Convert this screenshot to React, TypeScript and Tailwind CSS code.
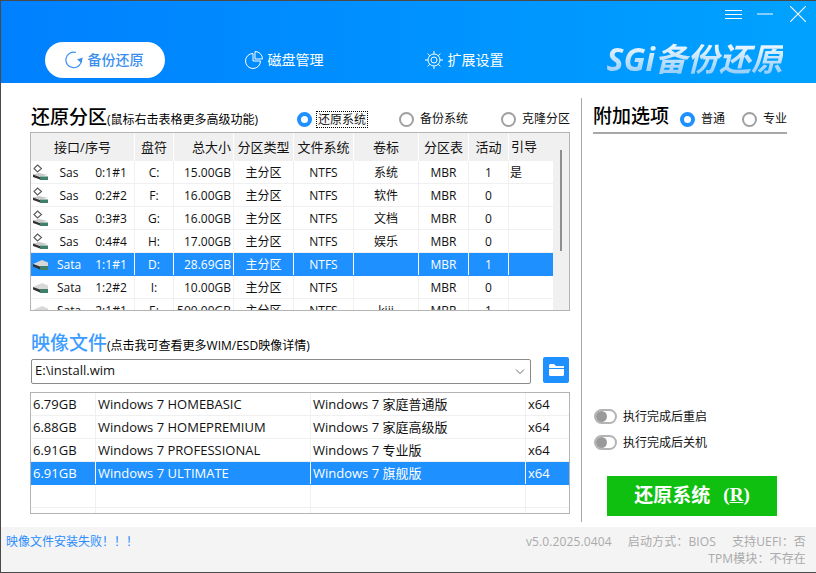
import React from "react";

const PARTS = [
  ["s", "Sas", "0:1#1", "C:", "15.00GB", "主分区", "NTFS", "系统", "MBR", "1", "是"],
  ["s", "Sas", "0:2#2", "F:", "16.00GB", "主分区", "NTFS", "软件", "MBR", "0", ""],
  ["s", "Sas", "0:3#3", "G:", "16.00GB", "主分区", "NTFS", "文档", "MBR", "0", ""],
  ["s", "Sas", "0:4#4", "H:", "17.00GB", "主分区", "NTFS", "娱乐", "MBR", "0", ""],
  ["d", "Sata", "1:1#1", "D:", "28.69GB", "主分区", "NTFS", "", "MBR", "1", ""],
  ["d", "Sata", "1:2#2", "I:", "10.00GB", "主分区", "NTFS", "", "MBR", "0", ""],
  ["d", "Sata", "2:1#1", "E:", "500.00GB", "主分区", "NTFS", "kiii", "MBR", "1", ""],
];

const IMAGES = [
  ["6.79GB", "Windows 7 HOMEBASIC", "Windows 7 家庭普通版", "x64"],
  ["6.88GB", "Windows 7 HOMEPREMIUM", "Windows 7 家庭高级版", "x64"],
  ["6.91GB", "Windows 7 PROFESSIONAL", "Windows 7 专业版", "x64"],
  ["6.91GB", "Windows 7 ULTIMATE", "Windows 7 旗舰版", "x64"],
  ["", "", "", ""],
  ["", "", "", ""],
];

function Radio({ on }: { on?: boolean }) {
  return on ? (
    <span className="block w-[15px] h-[15px] rounded-full border-[4px] border-[#1e90ff] bg-white shrink-0" />
  ) : (
    <span className="block w-[15px] h-[15px] rounded-full border-2 border-[#a0a0a0] bg-white shrink-0" />
  );
}

function Toggle() {
  return (
    <span className="flex items-center w-[23px] h-[15px] rounded-full border-2 border-[#b4b4b4] bg-white shrink-0">
      <span className="block w-[11px] h-[11px] rounded-full bg-[#9a9a9a]" />
    </span>
  );
}

function DriveIcon({ kind }: { kind: string }) {
  if (kind === "s") {
    return (
      <svg width="17" height="17" viewBox="0 0 17 17" className="shrink-0">
        <path d="M5.5 1 L9.5 4.5 L5.5 8 L2 4.5 Z" fill="#fff" stroke="#5a5a5a" strokeWidth="1.1" />
        <path d="M1 10.5 L7 9 L16 11 L8 12.5 Z" fill="#c8c8c8" />
        <path d="M1 10.5 L8 13 L8 15.5 L1 13 Z" fill="#333" />
        <rect x="8" y="12.5" width="8" height="3.5" fill="#3f7f6c" />
      </svg>
    );
  }
  return (
    <svg width="17" height="17" viewBox="0 0 17 17" className="shrink-0">
      <path d="M1 8 L10 4 L16 6.5 L16 10 L8 11 Z" fill="#d8d8d8" />
      <path d="M1 8 L8 10.5 L8 13.5 L1 10.5 Z" fill="#333" />
      <rect x="8" y="10" width="8" height="4" fill="#3f7f6c" />
    </svg>
  );
}

function Section({ title, note, blue }: { title: string; note: string; blue?: boolean }) {
  return (
    <div className="flex items-end pl-[1px]">
      <span className={`text-[19px] leading-[24px] font-medium ${blue ? "text-[#3d9cff]" : "text-black"}`}>{title}</span>
      <span className="text-[12px] leading-[18px] text-black">{note}</span>
    </div>
  );
}

const numCols = [
  "w-[39px] text-center",
  "w-[60px] text-right pr-[2px]",
  "w-[60px] text-center",
  "w-[60px] text-center",
  "w-[65px] text-center",
  "w-[50px] text-center",
  "w-[40px] text-center",
];

export default function App() {
  return (
    <div className="w-[816px] h-[573px] flex flex-col overflow-hidden bg-white border-t border-b border-l border-[#4a4a4a] font-[Open_Sans,Noto_Sans_CJK_SC,sans-serif] text-[12px] text-[#111]">
      {/* header */}
      <header className="h-[82px] shrink-0 bg-gradient-to-r from-[#0080ff] to-[#00a2ff] flex flex-col">
        <div className="flex justify-end items-start pt-[5px] pr-[10px] h-[41px] text-white">
          <svg width="18" height="10" viewBox="0 0 18 10" className="mt-[4px] mr-[14px]">
            <path d="M0 .5H17M0 4.5H17M0 8.5H17" stroke="#fff" strokeWidth="1" />
          </svg>
          <svg width="16" height="2" viewBox="0 0 16 2" className="mt-[7px] mr-[17px]">
            <path d="M0 1H16" stroke="#fff" strokeWidth="1" />
          </svg>
          <svg width="16" height="16" viewBox="0 0 16 16">
            <path d="M0 0L16 16M16 0L0 16" stroke="#fff" strokeWidth="1.1" />
          </svg>
        </div>
        <div className="flex items-start pl-[44px]">
          <div className="w-[120px] h-[36px] rounded-full bg-white flex items-center justify-center gap-[5px] pr-[2px] pb-[1px] text-[14px] text-[#3a8ef0] font-medium">
            <svg width="18" height="18" viewBox="0 0 18 18" fill="none">
              <path d="M16.5 9A7.8 7.8 0 1 1 11 1.5" stroke="#3a8ef0" strokeWidth="1.2" />
              <path d="M12 8.5L17.8 6.5L16.5 12Z" fill="#3a8ef0" />
            </svg>
            备份还原
          </div>
          <div className="ml-[60px] w-[120px] h-[36px] flex items-center justify-center gap-[5px] pr-[2px] pb-[1px] text-[14px] text-white">
            <svg width="18" height="18" viewBox="0 0 18 18" fill="none" stroke="#fff" strokeWidth="1">
              <path d="M8 2.5A7.5 7.5 0 1 0 15.5 10H8Z" />
              <path d="M10 .5A7.5 7.5 0 0 1 17.5 8H10Z" />
            </svg>
            磁盘管理
          </div>
          <div className="ml-[60px] w-[120px] h-[36px] flex items-center justify-center gap-[5px] pr-[2px] pb-[1px] text-[14px] text-white">
            <svg width="18" height="18" viewBox="0 0 18 18" fill="none" stroke="#fff" strokeWidth="1">
              <circle cx="9" cy="9" r="6" />
              <circle cx="9" cy="9" r="3" />
              <path d="M9 0V3M9 15V18M0 9H3M15 9H18M2.6 2.6L4.8 4.8M13.2 13.2L15.4 15.4M15.4 2.6L13.2 4.8M4.8 13.2L2.6 15.4" />
            </svg>
            扩展设置
          </div>
          <div className="ml-auto mr-[33px] -mt-[3px] text-[32px] leading-[40px] font-bold italic bg-gradient-to-b from-white to-[#86c6f8] bg-clip-text text-transparent">
            SGi备份还原
          </div>
        </div>
      </header>

      {/* body */}
      <main className="flex-1 flex min-h-0">
        <section className="w-[580px] shrink-0 pl-[29px] pt-[20px] flex flex-col">
          <div className="flex items-center w-[540px] h-[28px]">
            <Section title="还原分区" note="(鼠标右击表格更多高级功能)" />
            <div className="ml-auto flex items-center mt-[4px]">
              <Radio on />
              <span className="ml-[4px] px-[1px] border border-dotted border-black leading-[15px]">还原系统</span>
              <span className="ml-[31px]"><Radio /></span>
              <span className="ml-[6px]">备份系统</span>
              <span className="ml-[33px]"><Radio /></span>
              <span className="ml-[6px]">克隆分区</span>
            </div>
          </div>

          {/* partitions */}
          <div className="mt-[1px] w-[540px] h-[179px] border border-[#b4b4b4] flex overflow-hidden">
            <div className="w-[522px] shrink-0 flex flex-col">
              <div className="flex h-[28px] shrink-0 bg-[#f0f0f0] items-center text-[13px]">
                <div className="w-[104px] text-center border-r border-white leading-[28px]">接口/序号</div>
                <div className="w-[39px] text-center border-r border-white leading-[28px]">盘符</div>
                <div className="w-[60px] text-right pr-[2px] border-r border-white leading-[28px]">总大小</div>
                <div className="w-[60px] text-center border-r border-white leading-[28px]">分区类型</div>
                <div className="w-[60px] text-center border-r border-white leading-[28px]">文件系统</div>
                <div className="w-[65px] text-center border-r border-white leading-[28px]">卷标</div>
                <div className="w-[50px] text-center border-r border-white leading-[28px]">分区表</div>
                <div className="w-[40px] text-center border-r border-white leading-[28px]">活动</div>
                <div className="w-[44px] pl-[2px]">引导</div>
              </div>
              {PARTS.map((r, i) => {
                const sel = i === 4;
                const line = sel ? "border-white" : "border-[#f0f0f0]";
                return (
                  <div key={i} className={`flex h-[23px] shrink-0 items-center border-b ${sel ? "bg-[#1e90ff] text-white border-[#1e90ff]" : "border-[#f0f0f0]"}`}>
                    <div className={`w-[104px] h-full flex items-center border-r leading-[25px] ${line}`}>
                      <span className="pl-[1px] w-[17px]"><DriveIcon kind={r[0]} /></span>
                      <span className="w-[42px] text-center">{r[1]}</span>
                      <span className="w-[42px] text-center">{r[2]}</span>
                    </div>
                    {r.slice(3, 10).map((c, j) => (
                      <div key={j} className={`h-full leading-[24px] border-r ${line} ${numCols[j]}`}>{c}</div>
                    ))}
                    <div className="w-[44px] h-full leading-[24px] pl-[1px]">{r[10]}</div>
                  </div>
                );
              })}
            </div>
            <div className="flex-1 bg-[#f0f0f0] pt-[17px] flex justify-center">
              <div className="w-[2px] h-[101px] bg-[#8e8e8e]" />
            </div>
          </div>

          <div className="mt-[19px] h-[26px] flex items-center">
            <Section title="映像文件" note="(点击我可查看更多WIM/ESD映像详情)" blue />
          </div>

          <div className="mt-[1px] w-[540px] flex items-start">
            <div className="ml-[1px] mt-[2px] w-[500px] h-[25px] border border-[#8a8a8a] rounded-[2px] flex items-center pl-[3px] pr-[5px]">
              <span className="text-[13px] pb-[2px]">E:\install.wim</span>
              <svg width="10" height="6" viewBox="0 0 10 6" className="ml-auto" fill="none">
                <path d="M1 .5L5 4.5L9 .5" stroke="#666" strokeWidth="1" />
              </svg>
            </div>
            <div className="ml-[12px] w-[26px] h-[26px] rounded-[2px] bg-[#1e90ff] flex items-center justify-center">
              <svg width="15" height="12" viewBox="0 0 15 12">
                <path d="M0 1.5Q0 0 1.5 0H5L7 2H15V4H0Z" fill="#fff" />
                <path d="M0 5H15V10.5Q15 12 13.5 12H1.5Q0 12 0 10.5Z" fill="#fff" />
              </svg>
            </div>
          </div>

          {/* images */}
          <div className="mt-[8px] w-[540px] h-[122px] border border-[#b4b4b4] overflow-hidden">
            {IMAGES.map((r, i) => {
              const sel = i === 3;
              const line = sel ? "border-white" : "border-[#f0f0f0]";
              return (
                <div key={i} className={`flex h-[23px] items-center text-[13px] border-b ${sel ? "bg-[#1e90ff] text-white border-[#1e90ff]" : "border-[#f0f0f0]"}`}>
                  <div className={`w-[65px] h-full leading-[22px] pl-[2px] border-r ${line}`}>{r[0]}</div>
                  <div className={`w-[215px] h-full leading-[22px] pl-[2px] border-r ${line}`}>{r[1]}</div>
                  <div className={`w-[215px] h-full leading-[22px] pl-[2px] border-r ${line}`}>{r[2]}</div>
                  <div className="pl-[2px] h-full leading-[22px]">{r[3]}</div>
                </div>
              );
            })}
          </div>
        </section>

        {/* right */}
        <section className="flex-1 my-[15px] mb-[5px] border-l border-[#a8a8a8] pl-[11px] flex flex-col">
          <div className="w-[194px] h-[36px] flex items-center border-b-2 border-[#a8a8a8]">
            <span className="text-[19px] font-medium text-black leading-[24px] mt-[2px]">附加选项</span>
            <span className="ml-[11px] mt-[8px]"><Radio on /></span>
            <span className="ml-[6px] mt-[8px]">普通</span>
            <span className="ml-[17px] mt-[8px]"><Radio /></span>
            <span className="ml-[6px] mt-[8px]">专业</span>
          </div>
          <div className="mt-auto ml-[1px] flex flex-col gap-[11px]">
            <div className="flex items-center gap-[6px] h-[15px]"><Toggle /><span>执行完成后重启</span></div>
            <div className="flex items-center gap-[6px] h-[15px]"><Toggle /><span>执行完成后关机</span></div>
          </div>
          <div className="mt-[26px] mb-[6px] ml-[14px] w-[170px] h-[40px] bg-[#10c010] text-white flex items-center justify-center pb-[2px] text-[19px] font-bold">
            还原系统
            <span className="ml-[13px] font-[Liberation_Serif,serif]">(<span className="underline">R</span>)</span>
          </div>
        </section>
      </main>

      {/* footer */}
      <footer className="h-[45px] shrink-0 bg-[#f4f4f4] flex justify-between pl-[5px] pr-[10px] pt-[6px] leading-[17px] text-[#aaaaaa]">
        <span className="text-[#2a8cff]">映像文件安装失败！！！</span>
        <div className="flex flex-col items-end tracking-[0.13px]">
          <div className="flex gap-[16px]">
            <span>v5.0.2025.0404</span>
            <span>启动方式：BIOS</span>
            <span>支持UEFI：否</span>
          </div>
          <span>TPM模块：不存在</span>
        </div>
      </footer>
    </div>
  );
}
